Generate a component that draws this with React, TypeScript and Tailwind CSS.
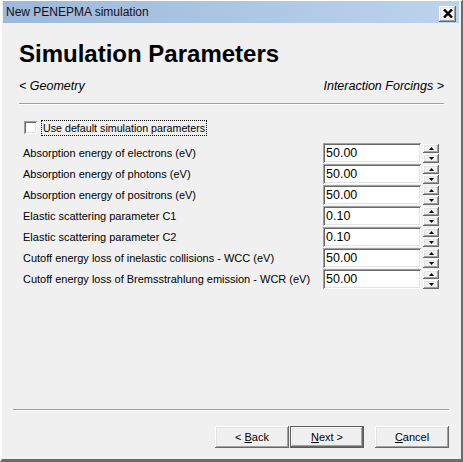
import { ReactNode } from "react";

const rows = [
  { label: "Absorption energy of electrons (eV)", value: "50.00" },
  { label: "Absorption energy of photons (eV)", value: "50.00" },
  { label: "Absorption energy of positrons (eV)", value: "50.00" },
  { label: "Elastic scattering parameter C1", value: "0.10" },
  { label: "Elastic scattering parameter C2", value: "0.10" },
  { label: "Cutoff energy loss of inelastic collisions - WCC (eV)", value: "50.00" },
  { label: "Cutoff energy loss of Bremsstrahlung emission - WCR (eV)", value: "50.00" },
];

const raised =
  "bg-[#f0f0f0] shadow-[inset_-1px_-1px_#696969,inset_1px_1px_#fff,inset_-2px_-2px_#a0a0a0,inset_2px_2px_#e3e3e3]";

const SpinHalf = ({ down }: { down?: boolean }) => (
  <div className={`h-[9px] w-[16px] flex items-center justify-center ${raised}`}>
    <svg width="5" height="3" viewBox="0 0 5 3">
      {down ? <path d="M0 0 H5 L2.5 3 Z" fill="#000" /> : <path d="M0 3 H5 L2.5 0 Z" fill="#000" />}
    </svg>
  </div>
);

const Button = ({ children, primary }: { children: ReactNode; primary?: boolean }) => (
  <button
    className={`w-[74px] h-[22px] text-[11px] text-black flex items-center justify-center whitespace-pre ${raised} ${
      primary ? "border border-[#5a5a5a]" : ""
    }`}
  >
    {children}
  </button>
);

const App = () => {
  return (
    <div className="w-[463px] h-[462px] flex flex-col bg-[#f0f0f0] border-t border-l-2 border-t-white border-l-white border-r-2 border-b-[3px] border-r-[#6b6b6b] border-b-[#6b6b6b] font-['Liberation_Sans',Arial,sans-serif] text-black overflow-hidden">
      {/* title bar */}
      <div className="h-[22px] ml-[1px] mr-[2px] flex items-center justify-between bg-linear-to-r from-[#9cb8da] to-[#bcd3ec]">
        <span className="pl-[3px] text-[12px] text-[#10101c]">New PENEPMA simulation</span>
        <div className={`w-[17px] h-[16px] mr-[3px] mt-[3px] flex items-center justify-center ${raised}`}>
          <svg width="10" height="9" viewBox="0 0 10 9">
            <path d="M1 0.5 L9 8.5 M9 0.5 L1 8.5" stroke="#000" strokeWidth="2.4" />
          </svg>
        </div>
      </div>

      {/* body */}
      <div className="flex-1 flex flex-col px-[17px]">
        <h1 className="mt-[17px] text-[24px] leading-[28px] font-bold">Simulation Parameters</h1>

        <div className="mt-[10px] h-[16px] flex items-center justify-between italic text-[12.5px]">
          <span>&lt; Geometry</span>
          <span>Interaction Forcings &gt;</span>
        </div>

        <div className="mt-[9px] border-t border-b border-t-[#a0a0a0] border-b-white" />

        <div className="mt-[14px] h-[17px] pl-[5px] flex items-center">
          <div className="w-[13px] h-[13px] bg-white shadow-[inset_1px_1px_#a0a0a0,inset_-1px_-1px_#fff,inset_2px_2px_#696969,inset_-2px_-2px_#e3e3e3]" />
          <span className="ml-[4px] px-[1px] text-[10.7px] leading-[14px] border border-dotted border-black">
            Use default simulation parameters
          </span>
        </div>

        <div className="mt-[7px] flex flex-col">
          {rows.map((row, i) => (
            <div key={i} className="h-[21px] flex items-start">
              <span className="flex-1 pl-[4px] h-[20px] flex items-center text-[11px]">{row.label}</span>
              <div className="w-[98px] h-[20px] bg-white pl-[3px] flex items-center text-[12.5px] shadow-[inset_1px_1px_#a0a0a0,inset_-1px_-1px_#fff,inset_2px_2px_#696969,inset_-2px_-2px_#e3e3e3]">
                {row.value}
              </div>
              <div className="ml-[2px] mr-[5px] mt-[1px] flex flex-col gap-[1px]">
                <SpinHalf />
                <SpinHalf down />
              </div>
            </div>
          ))}
        </div>
      </div>

      {/* footer */}
      <div className="pl-[11px] pr-[12px] pb-[11px]">
        <div className="border-t border-b border-t-[#a0a0a0] border-b-white" />
        <div className="mt-[15px] flex justify-end">
          <Button>
            {"< "}
            <u>B</u>ack
          </Button>
          <div className="ml-[1px]">
            <Button primary>
              <u>N</u>
              {"ext >"}
            </Button>
          </div>
          <div className="ml-[11px]">
            <Button>
              <u>C</u>ancel
            </Button>
          </div>
        </div>
      </div>
    </div>
  );
};

export default App;
